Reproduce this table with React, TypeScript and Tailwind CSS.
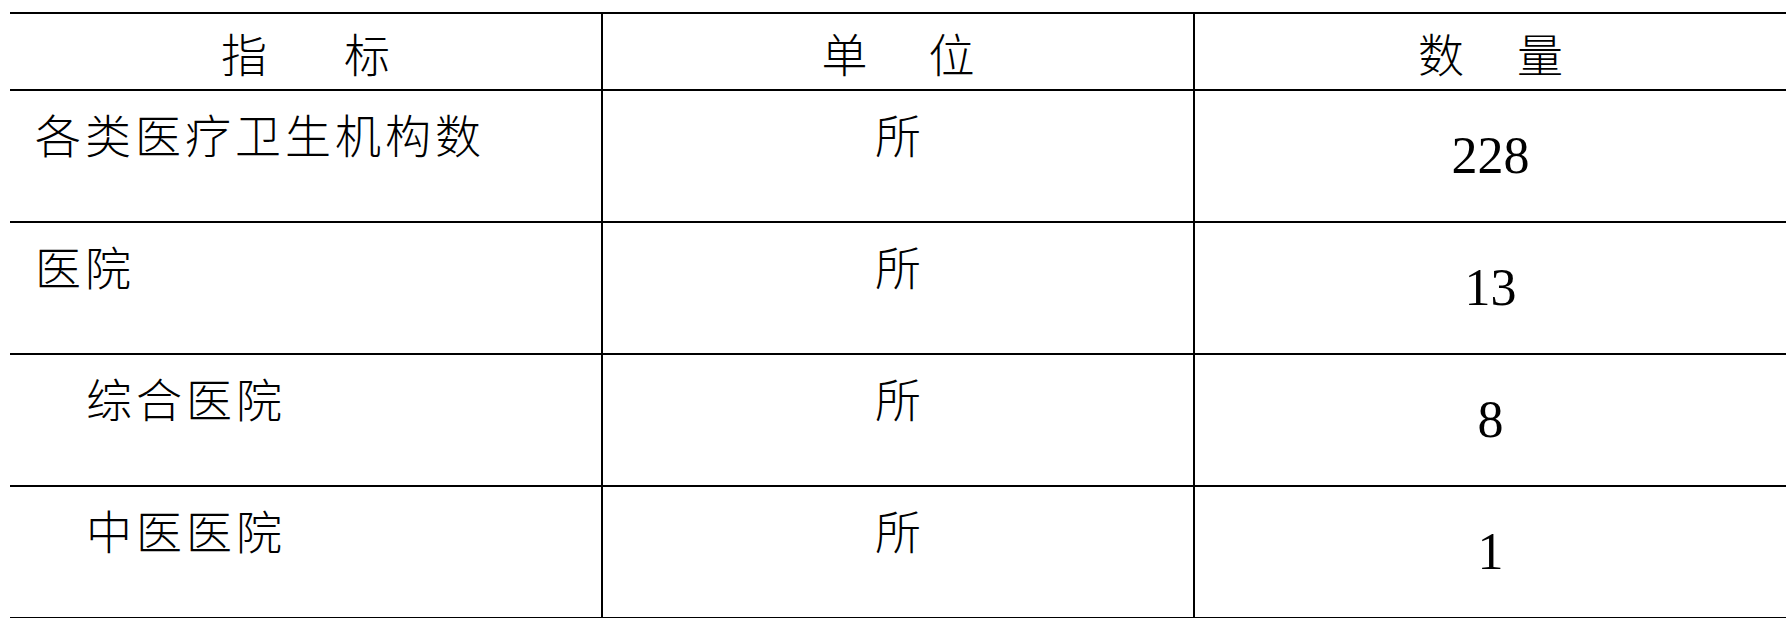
import React from "react";

const cjk = { fontFamily: '"Noto Sans CJK SC", "Noto Sans CJK JP", sans-serif' } as const;

const rows = [
  { name: "各类医疗卫生机构数", indent: false, unit: "所", value: "228" },
  { name: "医院", indent: false, unit: "所", value: "13" },
  { name: "综合医院", indent: true, unit: "所", value: "8" },
  { name: "中医医院", indent: true, unit: "所", value: "1" },
];

function HeaderCell({ a, b, gap, border }: { a: string; b: string; gap: string; border: boolean }) {
  return (
    <div
      className={`flex items-center justify-center h-[75px] text-[46px] leading-none font-light text-black ${border ? "border-l-2 border-black" : ""}`}
      style={cjk}
    >
      <span>{a}</span>
      <span className={gap}>{b}</span>
    </div>
  );
}

export default function App() {
  return (
    <div className="w-[1791px] h-[618px] bg-white overflow-hidden">
      <div className="ml-[10px] mt-[12px] w-[1776px] border-t-2 border-black">
        <div className="grid grid-cols-[591px_592px_593px] border-b-2 border-black">
          <HeaderCell a="指" b="标" gap="ml-[77px]" border={false} />
          <HeaderCell a="单" b="位" gap="ml-[61px]" border={true} />
          <HeaderCell a="数" b="量" gap="ml-[53px]" border={true} />
        </div>
        {rows.map((r) => (
          <div key={r.name} className="grid grid-cols-[591px_592px_593px] border-b-2 border-black h-[132px]">
            <div
              className={`pt-[19px] text-[46px] leading-none font-light tracking-[4px] text-black ${r.indent ? "pl-[76px]" : "pl-[25px]"}`}
              style={cjk}
            >
              {r.name}
            </div>
            <div
              className="border-l-2 border-black pt-[19px] text-center text-[46px] leading-none font-light text-black"
              style={cjk}
            >
              {r.unit}
            </div>
            <div
              className="border-l-2 border-black flex items-center justify-center text-[52px] leading-none text-black"
              style={{ fontFamily: '"Liberation Serif", "Times New Roman", serif' }}
            >
              {r.value}
            </div>
          </div>
        ))}
      </div>
    </div>
  );
}
